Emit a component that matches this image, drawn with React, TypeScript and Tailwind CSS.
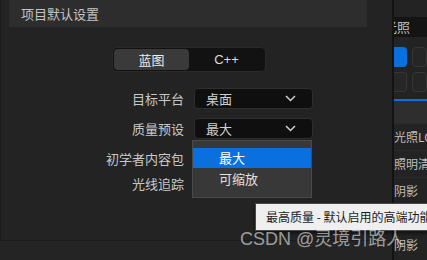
import React from 'react';

const cjk = { fontFamily: '"Noto Sans CJK SC", "Noto Sans", sans-serif' };

function Chevron() {
  return (
    <svg width="11" height="7" viewBox="0 0 11 7" fill="none">
      <path d="M1 1l4.5 4.5L10 1" stroke="#d0d0d0" strokeWidth="1.5" />
    </svg>
  );
}

function Select({ value }: { value: string }) {
  return (
    <div className="flex items-center justify-between w-[119px] h-[21px] pl-[11px] pr-[16px] bg-[#0f0f0f] border border-[#2e2e2e] rounded-[4px] text-[13px] text-[#cfcfcf]">
      <span>{value}</span>
      <Chevron />
    </div>
  );
}

const sideRows = ['光照LOD', '照明清晰度', '阴影', '阴影质量', '阴影'];

export default function App() {
  return (
    <div className="relative w-[427px] h-[260px] overflow-hidden bg-[#232323] flex" style={cjk}>
      {/* main panel */}
      <div className="w-[392px] flex flex-col">
        <div className="h-[241px] border-l border-b border-[#1a1a1a] flex flex-col">
          <div className="ml-[8px] mr-[25px] h-[27px] bg-[#2d2d2d] flex items-center pl-[12px] text-[13px] text-[#c4c4c4]">
            项目默认设置
          </div>

          <div className="ml-[111px] mt-[20px] flex w-[154px] h-[25px] p-px bg-[#121212] border border-[#2a2a2a] rounded-[5px] text-[13px]">
            <div className="w-[75px] flex items-center justify-center bg-[#3a3a3a] rounded-[4px] text-[#ececec]">蓝图</div>
            <div className="flex-1 flex items-center justify-center text-[#dcdcdc]" style={{ fontFamily: '"Liberation Sans", sans-serif' }}>C++</div>
          </div>

          <div className="mt-[16px] grid grid-cols-[183px_1fr] gap-x-[10px] text-[13px] text-[#c8c8c8]">
            <div className="h-[21px] flex items-center justify-end">目标平台</div>
            <Select value="桌面" />
            <div className="mt-[9px] h-[21px] flex items-center justify-end">质量预设</div>
            <div className="mt-[9px]"><Select value="最大" /></div>
            <div className="mt-[9px] h-[21px] flex items-center justify-end">初学者内容包</div>
            <div className="mt-[9px] h-[21px]" />
            <div className="mt-[4px] h-[21px] flex items-center justify-end">光线追踪</div>
            <div className="mt-[4px] h-[21px]" />
          </div>
        </div>
        <div className="flex-1 bg-[#242424]" />
      </div>

      {/* divider */}
      <div className="w-[2px] bg-[#131313]" />

      {/* right panel, cut off */}
      <div className="flex-1 flex flex-col overflow-hidden text-[13px] text-[#c0c0c0]">
        <div className="h-[17px]" />
        <div className="h-[20px] bg-[#141414] flex items-center whitespace-nowrap -ml-[10px]">光照</div>
        <div className="mt-[10px] flex gap-[5px] h-[20px]">
          <div className="w-[17px] bg-[#0a6fdf] rounded-r-[4px]" />
          <div className="w-[20px] bg-[#262626] border border-[#363636] rounded-[4px]" />
        </div>
        <div className="mt-[5px] flex gap-[5px] h-[20px]">
          <div className="w-[17px] bg-[#262626] border border-l-0 border-[#363636] rounded-r-[4px]" />
          <div className="w-[20px] bg-[#262626] border border-[#363636] rounded-[4px]" />
        </div>
        <div className="mt-[7px] h-[2px] bg-[#0a6fdf]" />
        <div className="h-[22px] bg-[#2e2e2e]" />
        {sideRows.map((r, i) => (
          <div key={i} className="h-[27px] flex items-center whitespace-nowrap border-t border-[#2b2b2b] text-[12px] text-[#bdbdbd]">
            {r}
          </div>
        ))}
      </div>

      {/* open dropdown list */}
      <div className="absolute left-[192px] top-[140px] w-[120px] h-[58px] bg-[#383838] border border-[#4a4a4a] pt-[7px] text-[13px]">
        <div className="h-[20px] bg-[#0a6fdf] flex items-center pl-[26px] text-white">最大</div>
        <div className="h-[22px] flex items-center pl-[26px] text-[#e0e0e0]">可缩放</div>
      </div>

      {/* tooltip */}
      <div className="absolute left-[255px] top-[203px] w-[200px] h-[28px] bg-[#efefef] border border-[#4a4a4a] shadow-[0_2px_4px_rgba(0,0,0,0.6)] flex items-center pl-[10px] whitespace-nowrap text-[12px] text-[#1c1c1c]">
        最高质量 - 默认启用的高端功能
      </div>

      {/* watermark */}
      <div
        className="absolute left-[240px] top-[226px] whitespace-nowrap text-[18px] text-[rgba(235,235,235,0.62)]"
        style={{ fontFamily: '"Liberation Sans", "Noto Sans CJK SC", sans-serif' }}
      >
        CSDN @灵境引路人
      </div>
    </div>
  );
}
